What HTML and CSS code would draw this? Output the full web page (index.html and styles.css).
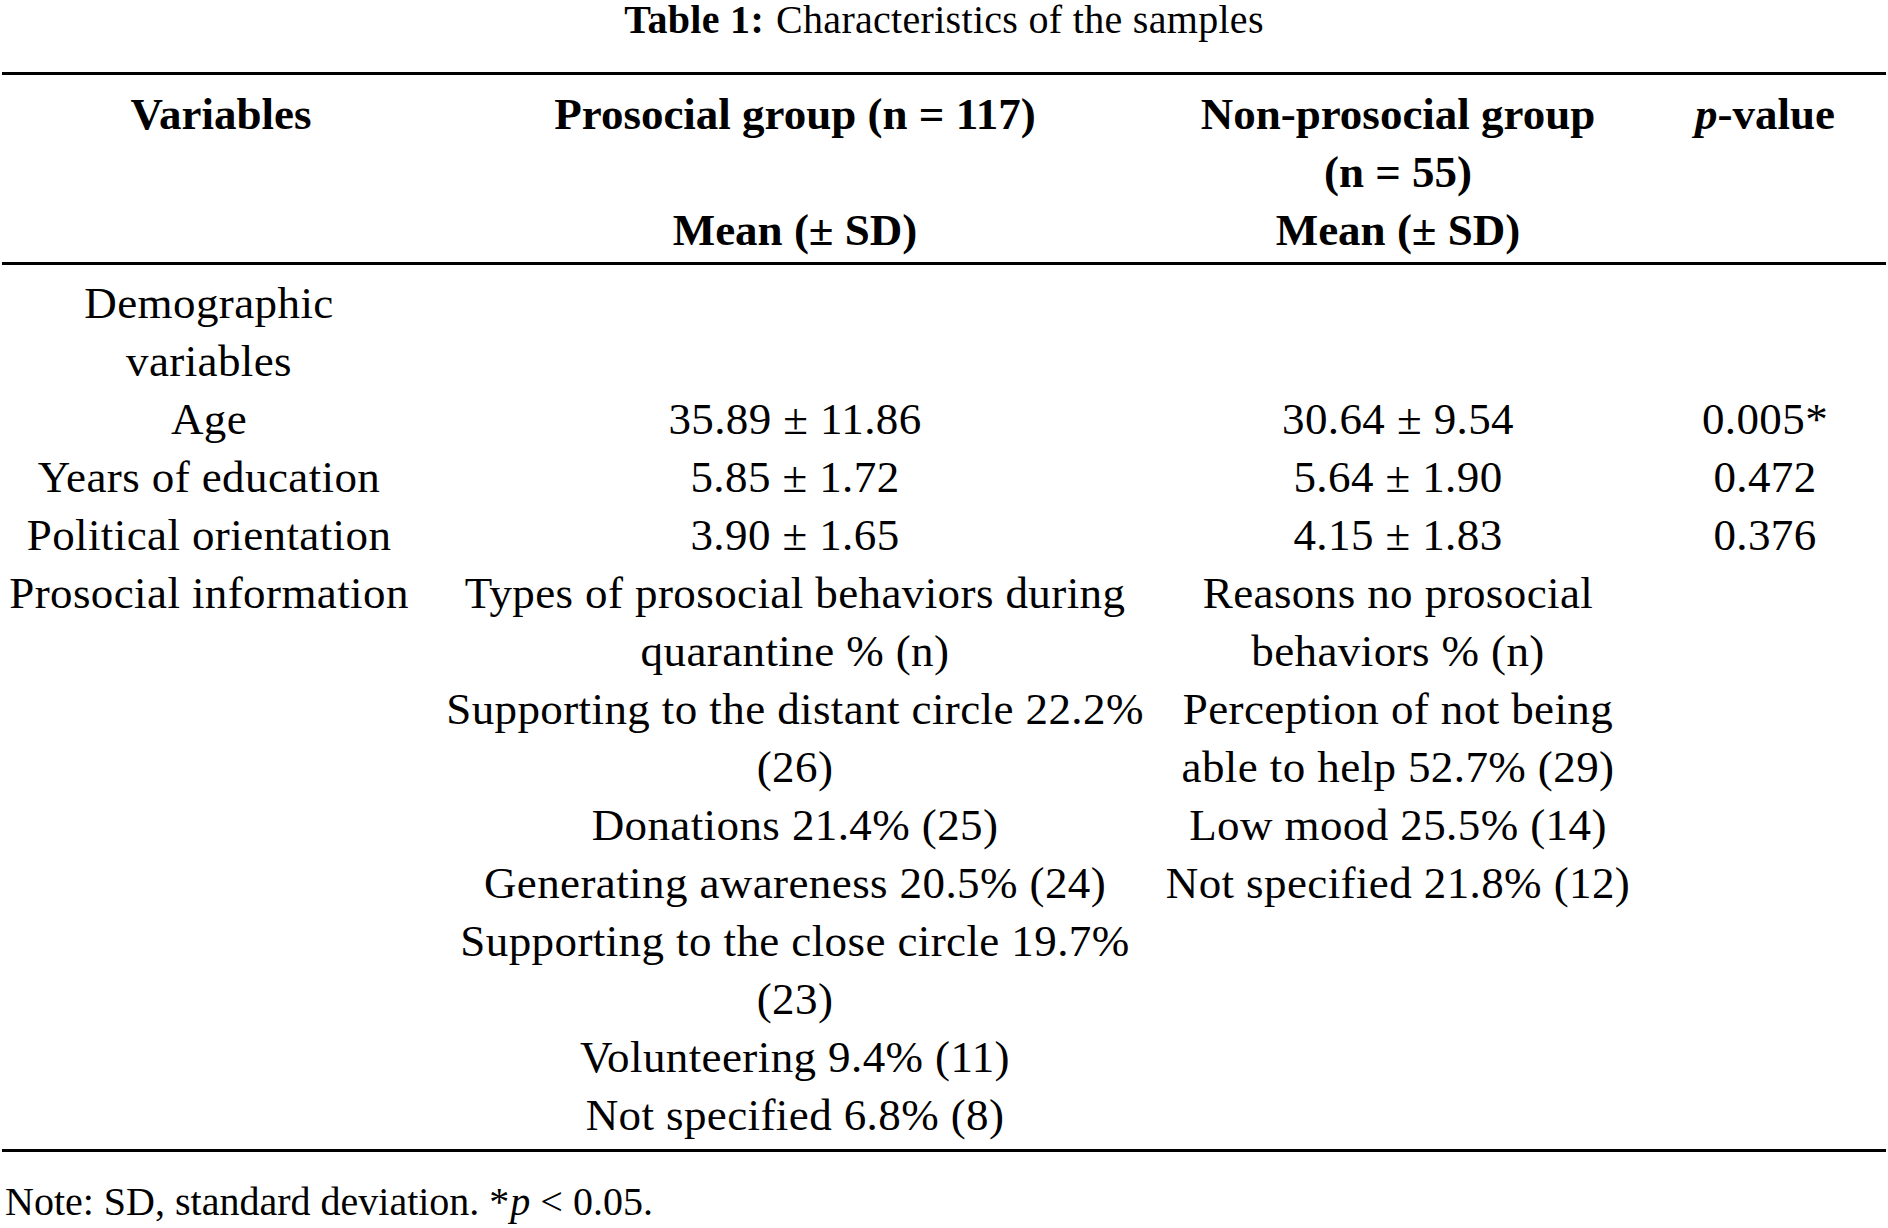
FILE: index.html
```html
<!DOCTYPE html>
<html lang="en">
<head>
<meta charset="utf-8">
<title>Table 1: Characteristics of the samples</title>
<link rel="stylesheet" href="styles.css">
</head>
<body>
<div class="page">
  <p class="caption"><b class="cap-label">Table 1:</b>Characteristics of the samples</p>
  <table class="tbl">
    <colgroup>
      <col class="c1"><col class="c2"><col class="c3"><col class="c4">
    </colgroup>
    <thead>
      <tr>
        <th class="col1">Variables</th>
        <th class="col2"><div class="grp">Prosocial group (n = 117)</div><div>Mean (± SD)</div></th>
        <th class="col3"><div class="grp">Non-prosocial group<br>(n = 55)</div><div>Mean (± SD)</div></th>
        <th class="col4"><i>p</i>-value</th>
      </tr>
    </thead>
    <tbody>
      <tr>
        <td class="col1">Demographic<br>variables</td>
        <td class="col2"></td>
        <td class="col3"></td>
        <td class="col4"></td>
      </tr>
      <tr>
        <td class="col1">Age</td>
        <td class="col2">35.89 ± 11.86</td>
        <td class="col3">30.64 ± 9.54</td>
        <td class="col4">0.005*</td>
      </tr>
      <tr>
        <td class="col1">Years of education</td>
        <td class="col2">5.85 ± 1.72</td>
        <td class="col3">5.64 ± 1.90</td>
        <td class="col4">0.472</td>
      </tr>
      <tr>
        <td class="col1">Political orientation</td>
        <td class="col2">3.90 ± 1.65</td>
        <td class="col3">4.15 ± 1.83</td>
        <td class="col4">0.376</td>
      </tr>
      <tr>
        <td class="col1">Prosocial information</td>
        <td class="col2">Types of prosocial behaviors during<br>quarantine % (n)<br>Supporting to the distant circle 22.2%<br>(26)<br>Donations 21.4% (25)<br>Generating awareness 20.5% (24)<br>Supporting to the close circle 19.7%<br>(23)<br>Volunteering 9.4% (11)<br>Not specified 6.8% (8)</td>
        <td class="col3">Reasons no prosocial<br>behaviors % (n)<br>Perception of not being<br>able to help 52.7% (29)<br>Low mood 25.5% (14)<br>Not specified 21.8% (12)</td>
        <td class="col4"></td>
      </tr>
    </tbody>
  </table>
  <p class="note">Note: SD, standard deviation. <span class="ast">*</span><i>p</i> &lt; 0.05.</p>
</div>
</body>
</html>
```

FILE: styles.css
```css
html, body {
  margin: 0;
  padding: 0;
  background: #ffffff;
}

body {
  font-family: "Liberation Serif", "Times New Roman", serif;
  color: #000000;
}

.page {
  width: 1888px;
}

.caption {
  margin: 0;
  height: 40px;
  line-height: 40px;
  font-size: 40px;
  letter-spacing: 0.3px;
  text-align: center;
  white-space: nowrap;
}

.cap-label {
  margin-right: 12px;
}

.tbl {
  margin: 32px 0 0 2px;
  width: 1884px;
  table-layout: fixed;
  border-collapse: separate;
  border-spacing: 0;
  border-top: 3px solid #000;
  border-bottom: 3px solid #000;
  font-size: 45px;
  line-height: 58px;
  letter-spacing: 0.4px;
}

col.c1 { width: 414px; }
col.c2 { width: 744px; }
col.c3 { width: 490px; }
col.c4 { width: 236px; }

th, td {
  padding: 0;
  text-align: center;
  vertical-align: top;
  white-space: nowrap;
  font-weight: normal;
}

thead th {
  font-weight: bold;
  letter-spacing: 0;
  padding-top: 10px;
  padding-bottom: 3px;
  border-bottom: 3px solid #000;
}

.grp {
  height: 116px;
}

.col2 { padding-left: 14px; }
.col3 { padding-right: 14px; }
.col4 { padding-right: 6px; }

thead th.col1 { padding-left: 24px; }

tbody tr:first-child td { padding-top: 9px; }
tbody tr:last-child td { padding-bottom: 5px; }

.note {
  margin: 26px 0 0 5px;
  font-size: 40px;
  line-height: 48px;
  white-space: nowrap;
}

.ast {
  margin-right: 1px;
}
```
